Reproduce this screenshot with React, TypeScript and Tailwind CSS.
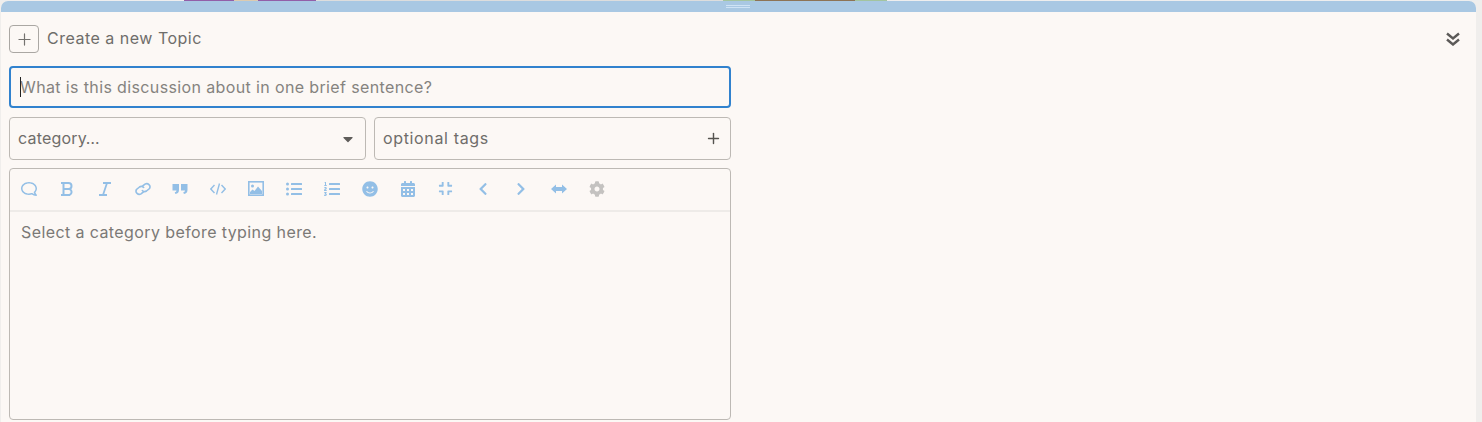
import React from "react";
import { FaRegComment, FaListUl, FaListOl, FaSmile, FaCalendarAlt, FaCompress, FaChevronLeft, FaChevronRight, FaCog, FaCaretDown } from "react-icons/fa";
import { Plus } from "lucide-react";

const cls = "w-[16px] h-[16px] text-[#93bfe6]";
const Bold = () => (
  <svg viewBox="0 0 16 16" className={cls} fill="none" stroke="currentColor" strokeWidth="2">
    <path d="M2 2h7.500a3 3 0 0 1 0 6H4.500M4.500 8h6a3.200 3.200 0 0 1 0 6H2M4.500 2v12" />
  </svg>
);
const Italic = () => (
  <svg viewBox="0 0 16 16" className={cls} fill="none" stroke="currentColor" strokeWidth="1.800">
    <path d="M6 2h8M2 14h8M10 2 6 14" />
  </svg>
);
const LinkI = () => (
  <svg viewBox="0 0 16 16" className={cls} fill="none" stroke="currentColor" strokeWidth="1.600">
    <path d="M7 5.500 10 3.200a3.200 3.200 0 0 1 4.500 4.300L11.500 10a3 3 0 0 1-4.500-1M9 10.500l-3 2.300a3.200 3.200 0 0 1-4.500-4.300L4.500 6A3 3 0 0 1 9 7" />
  </svg>
);
const Quote = () => (
  <svg viewBox="0 0 16 16" className={cls} fill="currentColor">
    <path d="M.5 3h6.500v6c0 2.200-1.200 3.500-3.500 4l-.8-1.600c1.200-.4 1.800-1 1.800-1.900H.5zM9 3h6.500v6c0 2.200-1.200 3.500-3.500 4l-.8-1.600c1.200-.4 1.800-1 1.800-1.900H9z" />
  </svg>
);
const Code = () => (
  <svg viewBox="0 0 16 16" className={cls} fill="none" stroke="currentColor" strokeWidth="1.400">
    <path d="M4.500 4 .8 8l3.700 4M11.500 4l3.700 4-3.700 4M9.500 2.500 6.500 13.500" />
  </svg>
);
const Picture = () => (
  <svg viewBox="0 0 16 15" className="w-[16px] h-[15px] text-[#93bfe6]">
    <rect x=".8" y=".8" width="14.400" height="13.400" fill="none" stroke="currentColor" strokeWidth="1.600" />
    <circle cx="4.500" cy="5" r="1.500" fill="currentColor" />
    <path d="M2 13v-2l2.500-2.500L6.500 10l3.500-4.500 4 4.500v3z" fill="currentColor" />
  </svg>
);
const Arrows = () => (
  <svg viewBox="0 0 16 16" className={cls} fill="currentColor">
    <path d="M0 8l5-4.500V6h6V3.500L16 8l-5 4.500V10H5v2.500z" />
  </svg>
);

const tools: React.ComponentType[] = [
  () => <FaRegComment className="text-[16px] text-[#93bfe6] -scale-x-100" />,
  Bold,
  Italic,
  LinkI,
  Quote,
  Code,
  Picture,
  () => <FaListUl className="text-[16px] text-[#93bfe6]" />,
  () => <FaListOl className="text-[16px] text-[#93bfe6]" />,
  () => <FaSmile className="text-[16px] text-[#93bfe6]" />,
  () => <FaCalendarAlt className="text-[16px] text-[#93bfe6]" />,
  () => <FaCompress className="text-[15px] text-[#93bfe6]" />,
  () => <FaChevronLeft className="text-[14px] text-[#93bfe6]" />,
  () => <FaChevronRight className="text-[14px] text-[#93bfe6]" />,
  Arrows,
  () => <FaCog className="text-[16px] text-[#c4c2c0]" />,
];

export default function App() {
  return (
    <div className="h-[422px] w-[1482px] overflow-hidden bg-[#f0eeec] text-[#6f6d6a] font-['Inter','Liberation_Sans',sans-serif]">
      <div className="flex h-px">
        <div className="w-[184px] bg-[#eeeeee]" />
        <div className="w-[50px] bg-[#925fa8]" />
        <div className="w-[24px] bg-[#dccbb0]" />
        <div className="w-[58px] bg-[#925fa8]" />
        <div className="w-[407px] bg-[#dddddd]" />
        <div className="w-[32px] bg-[#a3c4a0]" />
        <div className="w-[100px] bg-[#8d7355]" />
        <div className="w-[32px] bg-[#a3c4a0]" />
        <div className="flex-1 bg-[#eeeeee]" />
      </div>
      <div className="ml-px w-[1475px] h-[421px] bg-[#fcf8f5] rounded-t-[7px] overflow-hidden">
        <div className="h-[11px] bg-[#a9c8e3] flex justify-center items-start pt-[4px] pr-[1px]">
          <div className="w-[24px] h-[3px] border-y border-[#cfe3f5]" />
        </div>
        <div className="pl-[8px] pt-[13px]">
          <div className="flex items-center h-[28px] w-[1451px]">
            <div className="w-[30px] h-[28px] border border-[#aaa7a3] rounded-[4px] flex items-center justify-center">
              <Plus className="w-[19px] h-[19px] text-[#74726f]" strokeWidth={1.5} />
            </div>
            <div className="ml-[8px] -mt-[2px] text-[16px] tracking-[0.5px] leading-none text-[#6f6d6a]">Create a new Topic</div>
            <svg viewBox="0 0 14 14" className="ml-auto w-[14px] h-[14px] text-[#5c5a58]" fill="none" stroke="currentColor" strokeWidth="2.400">
              <path d="M1 1.500 7 6.500l6-5M1 7.500 7 12.500l6-5" />
            </svg>
          </div>
          <div className="mt-[13px] w-[722px] flex flex-col gap-[8px]">
            <div className="h-[42px] border-2 border-[#3182ce] rounded-[4px] flex items-center pl-[9px] relative">
              <div className="absolute left-[8.500px] top-[9px] w-px h-[20px] bg-[#222]" />
              <span className="text-[16px] tracking-[0.37px] text-[#85837f]">What is this discussion about in one brief sentence?</span>
            </div>
            <div className="flex gap-[8px] h-[43px] mt-px">
              <div className="w-[357px] border border-[#bdb9b4] rounded-[4px] flex items-center pl-[8px] pr-[9px]">
                <span className="text-[16px] tracking-[0.2px] -mt-[2px]">category…</span>
                <FaCaretDown className="ml-auto text-[16px] text-[#5f5d5a]" />
              </div>
              <div className="w-[357px] border border-[#bdb9b4] rounded-[4px] flex items-center pl-[8px] pr-[8px]">
                <span className="text-[16px] tracking-[0.65px] -mt-[2px]">optional tags</span>
                <Plus className="ml-auto w-[17px] h-[17px] text-[#55534f]" strokeWidth={2} />
              </div>
            </div>
            <div className="h-[252px] border border-[#bdb9b4] rounded-[4px]">
              <div className="h-[43px] pb-[2px] border-b-2 border-[#eeebe8] flex items-center">
                {tools.map((I, i) => (
                  <div key={i} className="w-[37.87px] flex items-center justify-center"><I /></div>
                ))}
              </div>
              <div className="pl-[11px] pt-[9px] text-[16px] leading-[22px] tracking-[0.4px] text-[#7b7976]">Select a category before typing here.</div>
            </div>
          </div>
        </div>
      </div>
    </div>
  );
}
